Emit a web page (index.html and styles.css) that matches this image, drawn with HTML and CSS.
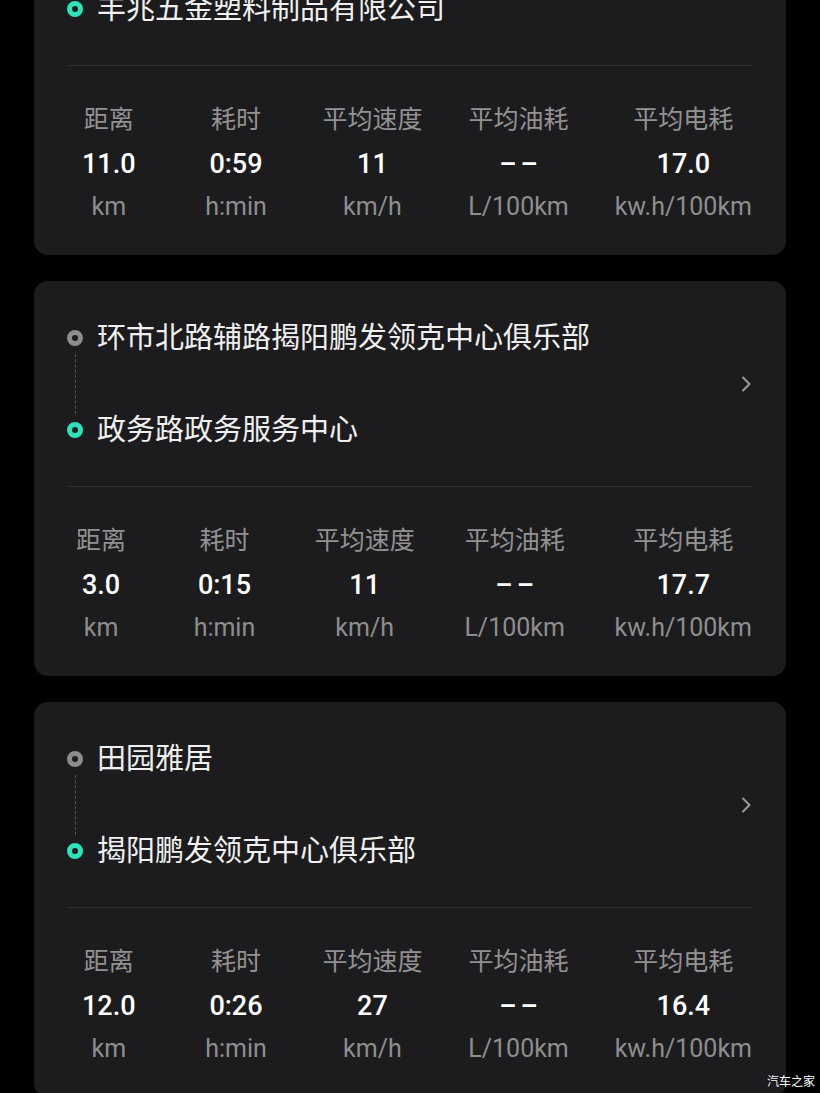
FILE: index.html
```html
<!DOCTYPE html>
<html lang="zh-CN">

<head>
  <meta charset="UTF-8">
  <meta name="viewport" content="width=device-width, initial-scale=1.0">
  <title>行程记录</title>
  <link rel="stylesheet" href="styles.css">
</head>

<body>

  <div class="trip-list">

    <!-- 上一条行程，只露出下半部分 -->
    <div class="trip">
      <div class="route">
        <div class="track">
          <span class="dot end"></span>
        </div>
        <div class="places">
          <div class="place">丰兆五金塑料制品有限公司</div>
        </div>
      </div>
      <div class="stats">
        <div class="stat"><span class="label">距离</span><span class="value">11.0</span><span class="unit">km</span></div>
        <div class="stat"><span class="label">耗时</span><span class="value">0:59</span><span class="unit">h:min</span></div>
        <div class="stat"><span class="label">平均速度</span><span class="value">11</span><span class="unit">km/h</span></div>
        <div class="stat"><span class="label">平均油耗</span><span class="value empty">––</span><span class="unit">L/100km</span></div>
        <div class="stat"><span class="label">平均电耗</span><span class="value">17.0</span><span class="unit">kw.h/100km</span></div>
      </div>
    </div>

    <div class="trip">
      <div class="route">
        <div class="track">
          <span class="dot start"></span>
          <span class="dash"></span>
          <span class="dot end"></span>
        </div>
        <div class="places">
          <div class="place">环市北路辅路揭阳鹏发领克中心俱乐部</div>
          <div class="place">政务路政务服务中心</div>
        </div>
        <svg class="chevron" width="12" height="18" viewBox="0 0 12 18">
          <path d="M3 2.5 L9.5 9 L3 15.5" fill="none" stroke="#9a9a9a" stroke-width="2" stroke-linecap="round" stroke-linejoin="round" />
        </svg>
      </div>
      <div class="stats">
        <div class="stat"><span class="label">距离</span><span class="value">3.0</span><span class="unit">km</span></div>
        <div class="stat"><span class="label">耗时</span><span class="value">0:15</span><span class="unit">h:min</span></div>
        <div class="stat"><span class="label">平均速度</span><span class="value">11</span><span class="unit">km/h</span></div>
        <div class="stat"><span class="label">平均油耗</span><span class="value empty">––</span><span class="unit">L/100km</span></div>
        <div class="stat"><span class="label">平均电耗</span><span class="value">17.7</span><span class="unit">kw.h/100km</span></div>
      </div>
    </div>

    <div class="trip">
      <div class="route">
        <div class="track">
          <span class="dot start"></span>
          <span class="dash"></span>
          <span class="dot end"></span>
        </div>
        <div class="places">
          <div class="place">田园雅居</div>
          <div class="place">揭阳鹏发领克中心俱乐部</div>
        </div>
        <svg class="chevron" width="12" height="18" viewBox="0 0 12 18">
          <path d="M3 2.5 L9.5 9 L3 15.5" fill="none" stroke="#9a9a9a" stroke-width="2" stroke-linecap="round" stroke-linejoin="round" />
        </svg>
      </div>
      <div class="stats">
        <div class="stat"><span class="label">距离</span><span class="value">12.0</span><span class="unit">km</span></div>
        <div class="stat"><span class="label">耗时</span><span class="value">0:26</span><span class="unit">h:min</span></div>
        <div class="stat"><span class="label">平均速度</span><span class="value">27</span><span class="unit">km/h</span></div>
        <div class="stat"><span class="label">平均油耗</span><span class="value empty">––</span><span class="unit">L/100km</span></div>
        <div class="stat"><span class="label">平均电耗</span><span class="value">16.4</span><span class="unit">kw.h/100km</span></div>
      </div>
    </div>

  </div>

  <div class="watermark">汽车之家</div>

</body>

</html>
```

FILE: styles.css
```css
html,
body {
  margin: 0;
  background-color: #000;
  height: 1093px;
  overflow: hidden;
}

body {
  position: relative;
  font-family: Roboto, "Noto Sans CJK SC", sans-serif;
  color: #eee;
}

.trip-list {
  display: flex;
  flex-direction: column;
  gap: 26px;
  padding: 0 34px;
  margin-top: -48px;
}

.trip {
  background-color: #1c1c1e;
  border-radius: 14px;
  padding: 37px 34px 0;
}

.route {
  display: flex;
  align-items: stretch;
  padding-bottom: 36px;
  border-bottom: 1px solid #2e2e30;
}

.track {
  display: flex;
  flex-direction: column;
  align-items: center;
  width: 16px;
  padding: 12px 0;
  margin: 0 14px 0 -1px;
}

.dot {
  width: 16px;
  height: 16px;
  box-sizing: border-box;
  border-radius: 50%;
  border: 5px solid #8c8c8c;
  flex: none;
}

.dot.end {
  border-color: #2de3b8;
}

.dash {
  flex: 1;
  margin: 8px 0;
  border-left: 1px dashed #555;
}

.places {
  flex: 1;
  display: flex;
  flex-direction: column;
  gap: 52px;
}

.place {
  font-size: 29px;
  line-height: 40px;
  color: #f0f0f0;
}

.chevron {
  align-self: center;
  flex: none;
}

.stats {
  display: flex;
  justify-content: space-between;
  padding: 32px 0 27px;
}

.stat {
  display: flex;
  flex-direction: column;
  align-items: center;
}

.label {
  font-size: 25px;
  line-height: 44px;
  color: #929292;
}

.value {
  padding: 0 14px;
  font-size: 27px;
  font-weight: 500;
  line-height: 44px;
  color: #fff;
}

.value.empty {
  letter-spacing: 4px;
  margin-right: -4px;
}

.unit {
  font-size: 25px;
  line-height: 42px;
  color: #8e8e8e;
}

.watermark {
  position: absolute;
  right: 5px;
  bottom: 4px;
  font-size: 12px;
  color: #fff;
  text-shadow: 0 0 2px rgba(0, 0, 0, 0.8);
}
```
